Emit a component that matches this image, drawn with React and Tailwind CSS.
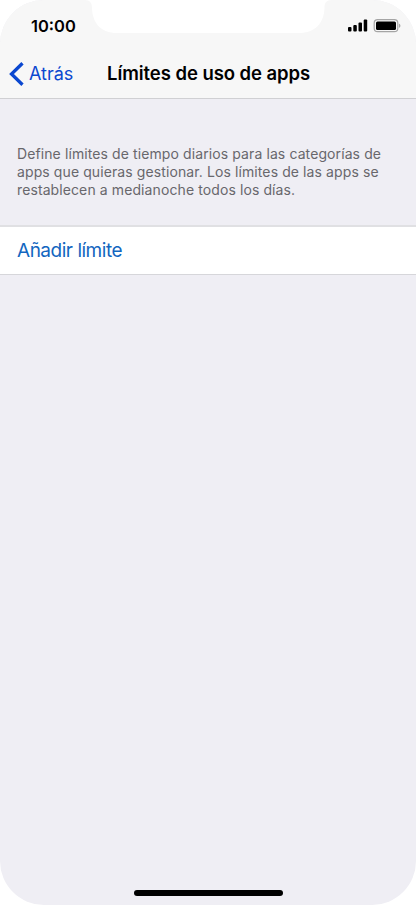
import React from "react";

const description = [
  "Define límites de tiempo diarios para las categorías de",
  "apps que quieras gestionar. Los límites de las apps se",
  "restablecen a medianoche todos los días.",
];

function Notch() {
  return (
    <svg className="absolute left-0 top-0" width="417" height="34" viewBox="0 0 417 34">
      <path
        d="M85 0C90 0 92 3 92 8C92.500 23 101 33 117 33H299C315 33 324 23 324.500 8C324.500 3 326 0 332 0Z"
        fill="#fff"
      />
    </svg>
  );
}

function StatusBar() {
  return (
    <div className="flex h-[50px] justify-between pl-[31px] pr-[15px] pt-[16px]">
      <span className="text-[16.500px] font-semibold leading-5">10:00</span>
      <svg width="53" height="20" viewBox="0 0 53 20">
        {/* Cobertura */}
        <rect x="0" y="11" width="3.500" height="4.500" rx="1" />
        <rect x="5.300" y="9" width="3.500" height="6.500" rx="1" />
        <rect x="10.500" y="6.500" width="3.500" height="9" rx="1" />
        <rect x="15.700" y="3.500" width="3.500" height="12" rx="1" />
        {/* Batería */}
        <rect x="26.200" y="3.700" width="23.600" height="12" rx="3.500" fill="none" stroke="#a5a5a5" strokeWidth="1.200" />
        <rect x="28" y="5.500" width="20" height="8.500" rx="1.500" />
        <path d="M51 7.700C52.900 8.300 52.900 11.200 51 11.800Z" fill="#a5a5a5" />
      </svg>
    </div>
  );
}

function App() {
  return (
    <div className="h-[905px] w-[417px] bg-white">
      <div className="relative flex h-[905px] w-[416px] flex-col overflow-hidden rounded-[44px] bg-[#efeef4] font-['Inter',sans-serif] text-black">
        <header className="h-[99px] border-b border-[#d0d0d3] bg-[#f7f7f7]">
          <StatusBar />
          <nav className="flex h-12 items-center pl-[9px]">
            <button className="flex items-center text-[#0b48d0]">
              <svg width="15" height="24" viewBox="0 0 15 24" fill="none" stroke="currentColor" strokeWidth="3.300">
                <path d="M13.500 1.200L2.500 12L13.500 22.800" />
              </svg>
              <span className="ml-[5px] w-[78px] whitespace-nowrap text-left text-[18px] leading-6">Atrás</span>
            </button>
            <h1 className="whitespace-nowrap pb-[2px] text-[18.500px] font-semibold leading-6 tracking-[-0.06px]">
              Límites de uso de apps
            </h1>
          </nav>
        </header>

        <p className="pb-[26px] pl-[17px] pt-[46px] text-[14px] leading-[18px] tracking-[0.1px] text-[#68676c]">
          {description.map((line) => (
            <span key={line} className="block whitespace-nowrap">
              {line}
            </span>
          ))}
        </p>

        <button className="h-[50px] border-b border-t-2 border-b-[#d6d6da] border-t-[#e0e0e3] bg-white pl-[17px] pt-[2px] text-left text-[19px] tracking-[-0.48px] text-[#1266c0]">
          Añadir límite
        </button>

        <div className="mb-[9px] ml-[134px] mt-auto h-[6px] w-[149px] rounded-full bg-black" />
        <Notch />
      </div>
    </div>
  );
}

export default App;
